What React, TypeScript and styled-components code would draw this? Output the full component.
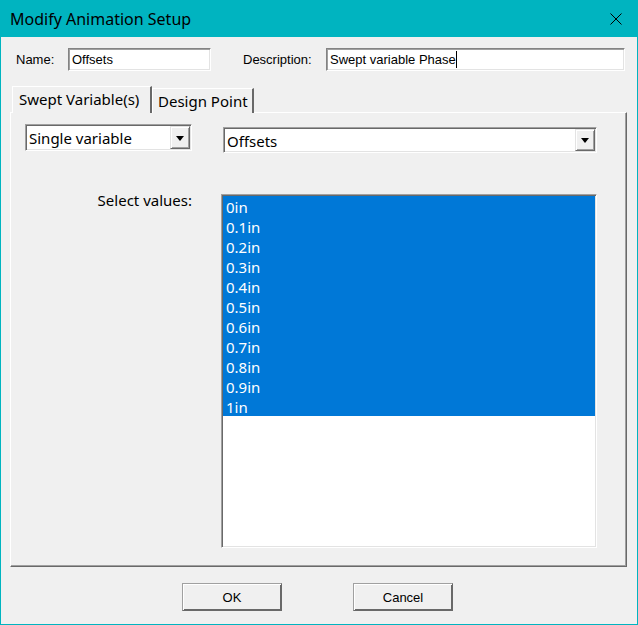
import React from 'react';
import styled, { createGlobalStyle } from 'styled-components';

const teal = '#00b4c0';
const ui = `"Noto Sans", "Open Sans", sans-serif`;
const small = `"Liberation Sans", Arial, sans-serif`;

const Global = createGlobalStyle`
  html, body { margin: 0; padding: 0; background: #f0f0f0; }
  body { width: 638px; height: 625px; overflow: hidden; }
`;

const Window = styled.div`
  width: 638px;
  height: 625px;
  box-sizing: border-box;
  display: flex;
  flex-direction: column;
  border: 1px solid ${teal};
  border-top: none;
  background: #f0f0f0;
`;

const TitleBar = styled.div`
  height: 37px;
  flex: none;
  background: ${teal};
  display: flex;
  align-items: center;
  justify-content: space-between;
  padding: 0 15px 0 9px;
  font: 16px ${ui};
  color: #000;
`;

const TitleText = styled.span`
  line-height: 20px;
  margin-top: 1px;
`;

const CloseIcon = styled.svg`
  width: 12px;
  height: 12px;
  display: block;
  margin-top: 1px;
`;

const Content = styled.div`
  flex: 1;
  display: flex;
  flex-direction: column;
  padding: 11px 10px 0 9px;
`;

const TopRow = styled.div`
  display: flex;
  align-items: center;
  height: 23px;
`;

const FieldLabel = styled.label<{ $w: number; $ml?: number }>`
  width: ${(p) => p.$w}px;
  margin-left: ${(p) => p.$ml ?? 0}px;
  font: 13px ${small};
  color: #000;
  flex: none;
`;

const TextInput = styled.div<{ $w: number }>`
  width: ${(p) => p.$w}px;
  height: 23px;
  box-sizing: border-box;
  flex: none;
  background: #fff;
  border: 1px solid;
  border-color: #838383 #fff #fff #838383;
  box-shadow: inset 1px 1px 0 #a0a0a0, inset -1px -1px 0 #e3e3e3;
  font: 13px ${small};
  color: #000;
  line-height: 21px;
  padding-left: 3px;
  white-space: nowrap;
`;

const Caret = styled.span`
  display: inline-block;
  width: 1px;
  height: 17px;
  background: #000;
  vertical-align: -4px;
`;

const TabStrip = styled.div`
  display: flex;
  align-items: flex-end;
  height: 26px;
  margin-top: 16px;
  padding-left: 2px;
  margin-bottom: -1px;
`;

const Tab = styled.div<{ $active?: boolean; $w: number }>`
  position: relative;
  z-index: ${(p) => (p.$active ? 1 : 0)};
  width: ${(p) => p.$w}px;
  height: ${(p) => (p.$active ? 27 : 25)}px;
  box-sizing: border-box;
  border-top: 1px solid #fff;
  border-left: 1px solid #fff;
  border-right: 2px solid;
  border-right-color: #696969;
  background: #f0f0f0;
  font: 15px ${ui};
  line-height: 20px;
  color: #000;
  padding: ${(p) => (p.$active ? '2px 0 0 6px' : '2px 0 0 5px')};
  white-space: nowrap;
`;

const Panel = styled.div`
  height: 455px;
  box-sizing: border-box;
  border: 1px solid;
  border-color: #fff #696969 #696969 #fff;
  box-shadow: inset -1px -1px 0 #a0a0a0;
  display: flex;
  flex-direction: column;
  padding: 11px 0 0 14px;
`;

const ComboRow = styled.div`
  display: flex;
  align-items: flex-start;
`;

const Combo = styled.div<{ $w: number; $h: number; $mt?: number; $ml?: number }>`
  width: ${(p) => p.$w}px;
  height: ${(p) => p.$h}px;
  margin-top: ${(p) => p.$mt ?? 0}px;
  margin-left: ${(p) => p.$ml ?? 0}px;
  box-sizing: border-box;
  flex: none;
  display: flex;
  align-items: stretch;
  background: #fff;
  border: 1px solid;
  border-color: #a0a0a0 #fff #fff #a0a0a0;
  box-shadow: inset 1px 1px 0 #696969, inset -1px -1px 0 #e3e3e3;
  padding: 1px;
`;

const ComboText = styled.div`
  flex: 1;
  font: 15px ${ui};
  line-height: 20px;
  color: #000;
  padding: 2px 0 0 2px;
  white-space: nowrap;
`;

const ComboButton = styled.div`
  width: 20px;
  flex: none;
  box-sizing: border-box;
  background: #f0f0f0;
  border: 1px solid;
  border-color: #e3e3e3 #696969 #696969 #e3e3e3;
  box-shadow: inset 1px 1px 0 #fff, inset -1px -1px 0 #a0a0a0;
  display: flex;
  align-items: center;
  justify-content: center;
`;

const Arrow = styled.span`
  width: 0;
  height: 0;
  margin-top: 1px;
  border-left: 4px solid transparent;
  border-right: 4px solid transparent;
  border-top: 5px solid #000;
`;

const ValuesRow = styled.div`
  display: flex;
  align-items: flex-start;
  margin-top: 36px;
`;

const ValuesLabel = styled.div`
  width: 167px;
  flex: none;
  text-align: right;
  font: 15px ${ui};
  line-height: 22px;
  color: #000;
`;

const ListBox = styled.div`
  width: 376px;
  height: 354px;
  margin: 5px 0 0 29px;
  box-sizing: border-box;
  flex: none;
  background: #fff;
  border: 1px solid;
  border-color: #a0a0a0 #fff #fff #a0a0a0;
  box-shadow: inset 1px 1px 0 #696969, inset -1px -1px 0 #e3e3e3;
  padding: 1px;
  display: flex;
  flex-direction: column;
`;

const ListItem = styled.div<{ $selected?: boolean }>`
  height: 20px;
  flex: none;
  background: ${(p) => (p.$selected ? '#0078d7' : 'transparent')};
  color: ${(p) => (p.$selected ? '#fff' : '#000')};
  font: 15px ${ui};
  line-height: 22px;
  padding-left: 3px;
  overflow: visible;
`;

const ButtonRow = styled.div`
  display: flex;
  gap: 71px;
  margin-top: 16px;
  padding-left: 172px;
`;

const DialogButton = styled.div`
  width: 100px;
  height: 28px;
  box-sizing: border-box;
  background: #f0f0f0;
  border: 1px solid;
  border-color: #a0a0a0 #696969 #696969 #a0a0a0;
  box-shadow: inset 1px 1px 0 #fff, inset -1px -1px 0 #696969;
  font: 13px ${small};
  color: #000;
  display: flex;
  align-items: center;
  justify-content: center;
`;

const values = ['0in', '0.1in', '0.2in', '0.3in', '0.4in', '0.5in', '0.6in', '0.7in', '0.8in', '0.9in', '1in'];

export default function App() {
  return (
    <>
      <Global />
      <Window>
        <TitleBar>
          <TitleText>Modify Animation Setup</TitleText>
          <CloseIcon viewBox="0 0 12 12">
            <path d="M0.5 0.5 L11.5 11.5 M11.5 0.5 L0.5 11.5" stroke="#000" strokeWidth="1" fill="none" />
          </CloseIcon>
        </TitleBar>
        <Content>
          <TopRow>
            <FieldLabel $w={52} $ml={6}>Name:</FieldLabel>
            <TextInput $w={143}>Offsets</TextInput>
            <FieldLabel $w={83} $ml={32}>Description:</FieldLabel>
            <TextInput $w={299}>
              Swept variable Phase<Caret />
            </TextInput>
          </TopRow>
          <TabStrip>
            <Tab $active $w={140}>Swept Variable(s)</Tab>
            <Tab $w={102}>Design Point</Tab>
          </TabStrip>
          <Panel>
            <ComboRow>
              <Combo $w={167} $h={27}>
                <ComboText>Single variable</ComboText>
                <ComboButton>
                  <Arrow />
                </ComboButton>
              </Combo>
              <Combo $w={374} $h={26} $mt={3} $ml={31}>
                <ComboText>Offsets</ComboText>
                <ComboButton>
                  <Arrow />
                </ComboButton>
              </Combo>
            </ComboRow>
            <ValuesRow>
              <ValuesLabel>Select values:</ValuesLabel>
              <ListBox>
                {values.map((v) => (
                  <ListItem key={v} $selected>
                    {v}
                  </ListItem>
                ))}
              </ListBox>
            </ValuesRow>
          </Panel>
          <ButtonRow>
            <DialogButton>OK</DialogButton>
            <DialogButton>Cancel</DialogButton>
          </ButtonRow>
        </Content>
      </Window>
    </>
  );
}
